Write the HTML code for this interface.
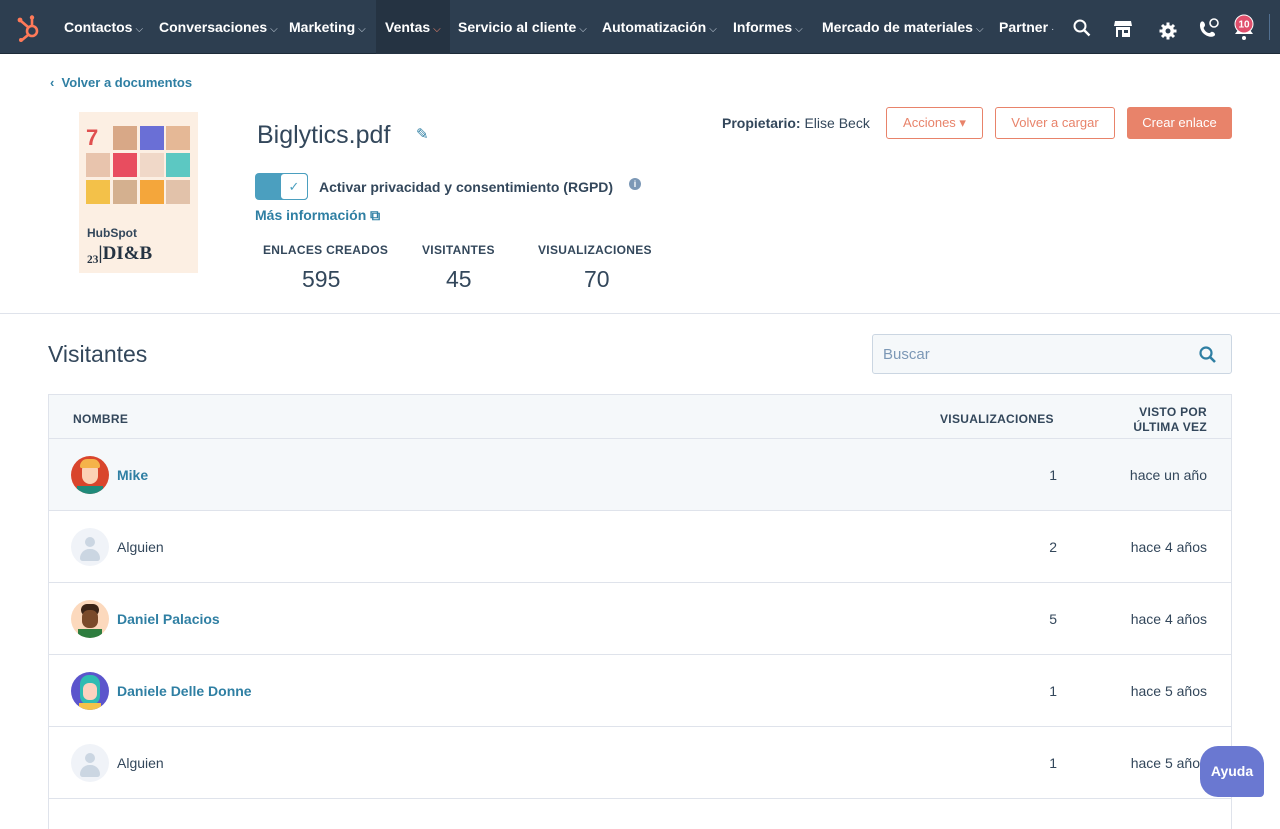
<!DOCTYPE html>
<html><head><meta charset="utf-8"><style>
*{box-sizing:border-box;margin:0;padding:0}
body{width:1280px;height:813px;overflow:hidden;background:#fff;font-family:"Liberation Sans",sans-serif;color:#33475b;position:relative}
.nav{position:absolute;left:0;top:0;width:1280px;height:54px;background:#2d3e50;border-bottom:1px solid #1d2b38}
.nav .it{position:absolute;top:0;height:54px;line-height:54px;color:#fff;font-size:14px;font-weight:bold;white-space:nowrap}
.nav .it small{font-size:10px;font-weight:normal;margin-left:3px;color:#cbd6e2}
.ab{position:absolute;white-space:nowrap}
.btn{position:absolute;top:107px;height:32px;border:1px solid #e8836a;border-radius:3px;color:#e8836a;font-size:13px;line-height:30px;text-align:center}
.cell{position:absolute;width:24px;height:24px}
.row{position:absolute;left:48px;width:1184px;height:72px;border-bottom:1px solid #dfe3eb;border-left:1px solid #dfe3eb;border-right:1px solid #dfe3eb}
.row .n{position:absolute;left:68px;top:28px;font-size:14px}
.row .l{color:#2f7fa3;font-weight:bold}
.row .v{position:absolute;right:174px;top:28px;font-size:14px}
.row .t{position:absolute;right:24px;top:28px;font-size:14px}
.av{position:absolute;left:22px;top:17px;width:38px;height:38px;border-radius:50%;overflow:hidden}
</style></head><body>
<div class="nav">
<svg class="ab" style="left:16px;top:14px" width="26" height="28" viewBox="0 0 26 28"><g fill="none" stroke="#ff7a59" stroke-width="2.6"><circle cx="16" cy="17" r="5"/><line x1="16" y1="4" x2="16" y2="12"/><line x1="5" y1="7" x2="12" y2="13"/><line x1="12" y1="21" x2="6" y2="26"/></g><circle cx="16" cy="3.5" r="2.2" fill="#ff7a59"/><circle cx="4" cy="6" r="2.4" fill="#ff7a59"/><circle cx="5" cy="26" r="2" fill="#ff7a59"/></svg>
<div class="it" style="left:64px">Contactos<small>⌵</small></div>
<div class="it" style="left:159px">Conversaciones<small>⌵</small></div>
<div class="it" style="left:289px">Marketing<small>⌵</small></div>
<div class="ab" style="left:376px;top:0;width:74px;height:54px;background:#253342"></div>
<div class="it" style="left:385px">Ventas<small style="color:#ff8f73">⌵</small></div>
<div class="it" style="left:458px">Servicio al cliente<small>⌵</small></div>
<div class="it" style="left:602px">Automatización<small>⌵</small></div>
<div class="it" style="left:733px">Informes<small>⌵</small></div>
<div class="it" style="left:822px">Mercado de materiales<small>⌵</small></div>
<div class="it" style="left:999px">Partner<small>·</small></div>
<svg class="ab" style="left:1073px;top:19px" width="18" height="18" viewBox="0 0 18 18"><circle cx="7" cy="7" r="5.5" fill="none" stroke="#fff" stroke-width="2"/><line x1="11" y1="11" x2="16.5" y2="16.5" stroke="#fff" stroke-width="2.4"/></svg>
<svg class="ab" style="left:1113px;top:19px" width="20" height="20" viewBox="0 0 20 20"><path d="M2 2h16l1 5H1z" fill="#fff"/><rect x="3" y="8" width="14" height="10" fill="#fff"/><rect x="5" y="11" width="4" height="7" fill="#2d3e50"/><rect x="11" y="11" width="4" height="3" fill="#2d3e50"/></svg>
<svg class="ab" style="left:1159px;top:22px" width="18" height="18" viewBox="0 0 18 18"><circle cx="9" cy="9" r="6" fill="#fff"/><g stroke="#fff" stroke-width="3"><line x1="9" y1="0.5" x2="9" y2="17.5"/><line x1="0.5" y1="9" x2="17.5" y2="9"/><line x1="3" y1="3" x2="15" y2="15"/><line x1="15" y1="3" x2="3" y2="15"/></g><circle cx="9" cy="9" r="2.5" fill="#2d3e50"/></svg>
<svg class="ab" style="left:1198px;top:18px" width="22" height="22" viewBox="0 0 22 22"><path d="M3 4c2-2 4 1 4 3s-2 2-1 4 3 4 5 4 2-2 4-1 3 3 1 4c-3 2-8 0-11-3S1 6 3 4z" fill="#fff"/><circle cx="16" cy="5" r="4" fill="none" stroke="#fff" stroke-width="1.6"/></svg>
<svg class="ab" style="left:1232px;top:14px" width="24" height="28" viewBox="0 0 24 28"><path d="M3 20h18l-3-4V9a6 6 0 0 0-12 0v7z" fill="#fff"/><circle cx="12" cy="24" r="2" fill="#fff"/><circle cx="12" cy="10" r="9" fill="#e04f6c" stroke="#fff" stroke-width="1"/><text x="12" y="13.5" font-size="10" font-weight="bold" fill="#fff" text-anchor="middle" font-family="Liberation Sans">10</text></svg>
<div class="ab" style="left:1269px;top:14px;width:1px;height:26px;background:#516f90"></div>
</div>

<div class="ab" style="left:50px;top:75px;font-size:13px;font-weight:bold;color:#2f7fa3">‹ &nbsp;Volver a documentos</div>

<div class="ab" style="left:79px;top:112px;width:119px;height:161px;background:#fcefe3"></div>
<div class="cell" style="left:86px;top:126px;color:#e04f4f;font-weight:bold;font-size:22px;line-height:24px">7</div>
<div class="cell" style="left:113px;top:126px;background:#d8a887"></div>
<div class="cell" style="left:140px;top:126px;background:#6a6fd6"></div>
<div class="cell" style="left:166px;top:126px;background:#e5b896"></div>
<div class="cell" style="left:86px;top:153px;background:#e8c4ad"></div>
<div class="cell" style="left:113px;top:153px;background:#e84d5f"></div>
<div class="cell" style="left:140px;top:153px;background:#f0d8c8"></div>
<div class="cell" style="left:166px;top:153px;background:#5cc8c2"></div>
<div class="cell" style="left:86px;top:180px;background:#f3c149"></div>
<div class="cell" style="left:113px;top:180px;background:#d4b08f"></div>
<div class="cell" style="left:140px;top:180px;background:#f4a63b"></div>
<div class="cell" style="left:166px;top:180px;background:#e2c2aa"></div>
<div class="ab" style="left:87px;top:226px;font-size:12px;font-weight:bold;color:#33475b">HubSpot</div>
<div class="ab" style="left:87px;top:243px;font-size:19px;font-weight:bold;font-family:'Liberation Serif',serif;color:#253342">⁲⁰₂₃|DI&amp;B</div>

<div class="ab" style="left:257px;top:121px;font-size:25px;color:#33475b">Biglytics.pdf</div>
<div class="ab" style="left:416px;top:125px;font-size:15px;color:#2f7fa3">✎</div>
<div class="ab" style="left:255px;top:173px;width:53px;height:27px;border-radius:4px;background:#4b9fbf"></div>
<div class="ab" style="left:280px;top:173px;width:28px;height:27px;border-radius:4px;background:#fff;border:1px solid #4b9fbf;color:#4b9fbf;font-size:13px;text-align:center;line-height:25px">✓</div>
<div class="ab" style="left:319px;top:179px;font-size:14px;font-weight:bold">Activar privacidad y consentimiento (RGPD)</div>
<div class="ab" style="left:629px;top:178px;width:12px;height:12px;border-radius:50%;background:#7c98b6;color:#fff;font-size:9px;text-align:center;line-height:12px;font-weight:bold">i</div>
<div class="ab" style="left:255px;top:207px;font-size:14px;font-weight:bold;color:#2f7fa3">Más información ⧉</div>
<div class="ab" style="left:263px;top:243px;font-size:12px;font-weight:bold;letter-spacing:.3px">ENLACES CREADOS</div>
<div class="ab" style="left:422px;top:243px;font-size:12px;font-weight:bold;letter-spacing:.3px">VISITANTES</div>
<div class="ab" style="left:538px;top:243px;font-size:12px;font-weight:bold;letter-spacing:.3px">VISUALIZACIONES</div>
<div class="ab" style="left:302px;top:266px;font-size:23px">595</div>
<div class="ab" style="left:446px;top:266px;font-size:23px">45</div>
<div class="ab" style="left:584px;top:266px;font-size:23px">70</div>

<div class="ab" style="left:722px;top:115px;font-size:14px"><b>Propietario:</b> Elise Beck</div>
<div class="btn" style="left:886px;width:97px">Acciones ▾</div>
<div class="btn" style="left:995px;width:120px">Volver a cargar</div>
<div class="btn" style="left:1127px;width:105px;background:#e8836a;color:#fff">Crear enlace</div>

<div class="ab" style="left:0;top:313px;width:1280px;height:1px;background:#dfe3eb"></div>
<div class="ab" style="left:48px;top:341px;font-size:23px">Visitantes</div>
<div class="ab" style="left:872px;top:334px;width:360px;height:40px;border:1px solid #cbd6e2;border-radius:3px;background:#f5f8fa"></div>
<div class="ab" style="left:883px;top:346px;font-size:15px;color:#7c98b6">Buscar</div>
<svg class="ab" style="left:1199px;top:346px" width="18" height="18" viewBox="0 0 18 18"><circle cx="7" cy="7" r="5.5" fill="none" stroke="#2f7fa3" stroke-width="2.2"/><line x1="11" y1="11" x2="16" y2="16" stroke="#2f7fa3" stroke-width="2.6"/></svg>

<div class="ab" style="left:48px;top:394px;width:1184px;height:45px;background:#f5f8fa;border:1px solid #dfe3eb"></div>
<div class="ab" style="left:73px;top:412px;font-size:12px;font-weight:bold;letter-spacing:.3px">NOMBRE</div>
<div class="ab" style="left:940px;top:412px;font-size:12px;font-weight:bold;letter-spacing:.3px">VISUALIZACIONES</div>
<div class="ab" style="right:73px;top:405px;font-size:12px;font-weight:bold;letter-spacing:.3px;text-align:right;line-height:15px">VISTO POR<br>ÚLTIMA VEZ</div>

<div class="row" style="top:439px;background:#f5f8fa"><div class="av" style="background:#d9452c"><div style="position:absolute;left:11px;top:6px;width:16px;height:22px;border-radius:8px;background:#fcd2b5"></div><div style="position:absolute;left:9px;top:3px;width:20px;height:9px;border-radius:8px 8px 2px 2px;background:#f5b34a"></div><div style="position:absolute;left:6px;top:30px;width:26px;height:10px;background:#1f8a7a"></div></div><div class="n l">Mike</div><div class="v">1</div><div class="t">hace un año</div></div>
<div class="row" style="top:511px"><div class="av" style="background:#f0f3f8"><div style="position:absolute;left:14px;top:9px;width:10px;height:10px;border-radius:50%;background:#cbd6e2"></div><div style="position:absolute;left:9px;top:21px;width:20px;height:12px;border-radius:10px 10px 3px 3px;background:#cbd6e2"></div></div><div class="n">Alguien</div><div class="v">2</div><div class="t">hace 4 años</div></div>
<div class="row" style="top:583px"><div class="av" style="background:#fcd9bd"><div style="position:absolute;left:10px;top:4px;width:18px;height:12px;border-radius:8px;background:#3b2417"></div><div style="position:absolute;left:11px;top:10px;width:16px;height:18px;border-radius:7px;background:#7a4a2a"></div><div style="position:absolute;left:7px;top:29px;width:24px;height:10px;background:#2e7d3f"></div></div><div class="n l">Daniel Palacios</div><div class="v">5</div><div class="t">hace 4 años</div></div>
<div class="row" style="top:655px"><div class="av" style="background:#5b55cc"><div style="position:absolute;left:9px;top:3px;width:20px;height:30px;border-radius:9px;background:#2fbcb2"></div><div style="position:absolute;left:12px;top:11px;width:14px;height:17px;border-radius:6px;background:#fcd2c0"></div><div style="position:absolute;left:8px;top:31px;width:22px;height:8px;background:#f4c24a"></div></div><div class="n l">Daniele Delle Donne</div><div class="v">1</div><div class="t">hace 5 años</div></div>
<div class="row" style="top:727px"><div class="av" style="background:#f0f3f8"><div style="position:absolute;left:14px;top:9px;width:10px;height:10px;border-radius:50%;background:#cbd6e2"></div><div style="position:absolute;left:9px;top:21px;width:20px;height:12px;border-radius:10px 10px 3px 3px;background:#cbd6e2"></div></div><div class="n">Alguien</div><div class="v">1</div><div class="t">hace 5 años</div></div>
<div class="row" style="top:799px;height:30px;border-bottom:none"></div>

<div class="ab" style="left:1200px;top:746px;width:64px;height:51px;border-radius:18px 18px 4px 18px;background:#6a78d1;color:#fff;font-size:14px;font-weight:bold;text-align:center;line-height:51px">Ayuda</div>
</body></html>
